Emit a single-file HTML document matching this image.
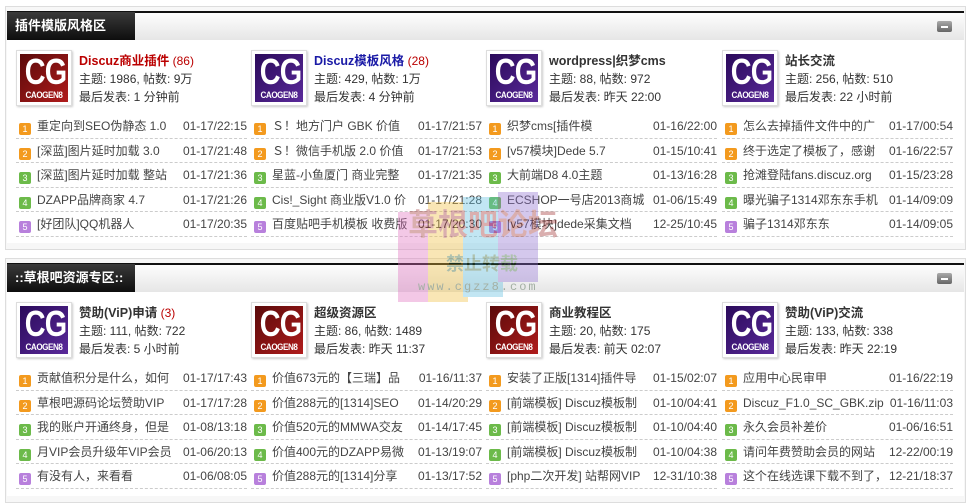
<!DOCTYPE html>
<html><head><meta charset="utf-8"><style>
*{margin:0;padding:0;box-sizing:border-box}
body{width:971px;height:503px;background:#fff;font-family:"Liberation Sans","Noto Sans CJK SC",sans-serif;font-size:12px;color:#333;position:relative;overflow:hidden}
.panel{position:absolute;left:5px;width:961px;border:1px solid #ddd;background:#f7f7f7}
.hd{position:absolute;left:1px;top:4px;right:1px;height:29px;border-top:2px solid #111;background:linear-gradient(#fdfdfd,#e6e6e6)}
.tab{position:absolute;left:0;top:-1px;width:128px;height:29px;background:linear-gradient(#3a3a3a,#0c0c0c);color:#fff;font-weight:bold;font-size:13px;line-height:28px;padding-left:8px}
.mn{position:absolute;right:12px;top:8px;width:15px;height:11px;background:linear-gradient(#aaa,#666);border-radius:2px}
.mn:after{content:"";position:absolute;left:4px;top:5px;width:7px;height:2px;background:#fff}
.body{position:absolute;left:1px;right:1px;top:33px;bottom:6px;background:#fff}
.f{position:absolute;width:230px;height:60px}
.logo{position:absolute;left:0;top:0;width:56px;height:56px;border:1px solid #ddd;background:#fff;box-shadow:1px 1px 2px #ccc;padding:3px}
.logo div{width:48px;height:48px;color:#fff;text-align:center;font-weight:bold;font-family:"Liberation Sans Narrow","Liberation Sans",sans-serif;overflow:hidden}
.logo b{display:block;font-size:36px;line-height:36px;transform:scaleX(.8);letter-spacing:-1px}
.logo i{display:block;font-style:normal;font-size:9px;line-height:10px;letter-spacing:-.5px;transform:scaleX(.9)}
.red{background:linear-gradient(135deg,#5a0a0a,#b01c1c)}
.pur{background:linear-gradient(135deg,#2a0a5a,#5a2a9a)}
.info{position:absolute;left:63px;top:2px;line-height:18px;white-space:nowrap}
.t{font-weight:bold;color:#333;font-size:12.5px}
.t.r{color:#b00}.t.b{color:#1a1aa6}
.n{color:#b00;font-weight:normal}
.row{position:absolute;width:231px;height:24.5px;border-bottom:1px dashed #ccc;line-height:24px;white-space:nowrap;overflow:hidden;color:#444}
.row s{display:inline-block;text-decoration:none;width:12px;height:12px;border-radius:2px;vertical-align:-2px;margin:0 6px 0 3px;color:#fff;font-size:9px;line-height:12px;text-align:center;font-style:normal}
.o{background:#f39a1e}.g{background:#6cba4a}.p{background:#b880dc}
.row em{position:absolute;right:0;top:0;font-style:normal;background:#fff;padding-left:4px}
.wm{position:absolute;left:398px;top:192px;width:170px;height:120px;opacity:.38}
</style></head><body>

<div class="panel" style="top:6px;height:244px">
<div class="hd"><div class="tab">插件模版风格区</div><div class="mn"></div></div>
<div class="body"></div>
</div>
<div class="panel" style="top:258px;height:245px">
<div class="hd"><div class="tab">::草根吧资源专区::</div><div class="mn"></div></div>
<div class="body"></div>
</div>

<div class="f" style="left:16px;top:50px"><div class="logo"><div class="red"><b>CG</b><i>CAOGEN8</i></div></div><div class="info"><span class="t r">Discuz商业插件</span> <span class="n">(86)</span><br>主题: 1986, 帖数: 9万<br>最后发表: 1 分钟前</div></div>
<div class="f" style="left:251px;top:50px"><div class="logo"><div class="pur"><b>CG</b><i>CAOGEN8</i></div></div><div class="info"><span class="t b">Discuz模板风格</span> <span class="n">(28)</span><br>主题: 429, 帖数: 1万<br>最后发表: 4 分钟前</div></div>
<div class="f" style="left:486px;top:50px"><div class="logo"><div class="pur"><b>CG</b><i>CAOGEN8</i></div></div><div class="info"><span class="t">wordpress|织梦cms</span><br>主题: 88, 帖数: 972<br>最后发表: 昨天 22:00</div></div>
<div class="f" style="left:722px;top:50px"><div class="logo"><div class="pur"><b>CG</b><i>CAOGEN8</i></div></div><div class="info"><span class="t">站长交流</span><br>主题: 256, 帖数: 510<br>最后发表: 22 小时前</div></div>

<div class="row" style="left:16px;top:114px"><s class="o">1</s>重定向到SEO伪静态 1.0<em>01-17/22:15</em></div>
<div class="row" style="left:16px;top:138.5px"><s class="o">2</s>[深蓝]图片延时加载 3.0<em>01-17/21:48</em></div>
<div class="row" style="left:16px;top:163px"><s class="g">3</s>[深蓝]图片延时加载 整站<em>01-17/21:36</em></div>
<div class="row" style="left:16px;top:187.5px"><s class="g">4</s>DZAPP品牌商家 4.7<em>01-17/21:26</em></div>
<div class="row" style="left:16px;top:212px"><s class="p">5</s>[好团队]QQ机器人<em>01-17/20:35</em></div>

<div class="row" style="left:251px;top:114px"><s class="o">1</s>Ｓ！地方门户 GBK 价值<em>01-17/21:57</em></div>
<div class="row" style="left:251px;top:138.5px"><s class="o">2</s>Ｓ！微信手机版 2.0 价值<em>01-17/21:53</em></div>
<div class="row" style="left:251px;top:163px"><s class="g">3</s>星蓝-小鱼厦门 商业完整<em>01-17/21:35</em></div>
<div class="row" style="left:251px;top:187.5px"><s class="g">4</s>Cis!_Sight 商业版V1.0 价<em>01-17/21:28</em></div>
<div class="row" style="left:251px;top:212px"><s class="p">5</s>百度贴吧手机模板 收费版<em>01-17/20:30</em></div>

<div class="row" style="left:486px;top:114px"><s class="o">1</s>织梦cms[插件模<em>01-16/22:00</em></div>
<div class="row" style="left:486px;top:138.5px"><s class="o">2</s>[v57模块]Dede 5.7<em>01-15/10:41</em></div>
<div class="row" style="left:486px;top:163px"><s class="g">3</s>大前端D8 4.0主题<em>01-13/16:28</em></div>
<div class="row" style="left:486px;top:187.5px"><s class="g">4</s>ECSHOP一号店2013商城<em>01-06/15:49</em></div>
<div class="row" style="left:486px;top:212px"><s class="p">5</s>[v57模块]dede采集文档<em>12-25/10:45</em></div>

<div class="row" style="left:722px;top:114px"><s class="o">1</s>怎么去掉插件文件中的广<em>01-17/00:54</em></div>
<div class="row" style="left:722px;top:138.5px"><s class="o">2</s>终于选定了模板了，感谢<em>01-16/22:57</em></div>
<div class="row" style="left:722px;top:163px"><s class="g">3</s>抢滩登陆fans.discuz.org<em>01-15/23:28</em></div>
<div class="row" style="left:722px;top:187.5px"><s class="g">4</s>曝光骗子1314邓东东手机<em>01-14/09:09</em></div>
<div class="row" style="left:722px;top:212px"><s class="p">5</s>骗子1314邓东东<em>01-14/09:05</em></div>

<div class="f" style="left:16px;top:302px"><div class="logo"><div class="pur"><b>CG</b><i>CAOGEN8</i></div></div><div class="info"><span class="t">赞助(ViP)申请</span> <span class="n">(3)</span><br>主题: 111, 帖数: 722<br>最后发表: 5 小时前</div></div>
<div class="f" style="left:251px;top:302px"><div class="logo"><div class="red"><b>CG</b><i>CAOGEN8</i></div></div><div class="info"><span class="t">超级资源区</span><br>主题: 86, 帖数: 1489<br>最后发表: 昨天 11:37</div></div>
<div class="f" style="left:486px;top:302px"><div class="logo"><div class="red"><b>CG</b><i>CAOGEN8</i></div></div><div class="info"><span class="t">商业教程区</span><br>主题: 20, 帖数: 175<br>最后发表: 前天 02:07</div></div>
<div class="f" style="left:722px;top:302px"><div class="logo"><div class="pur"><b>CG</b><i>CAOGEN8</i></div></div><div class="info"><span class="t">赞助(ViP)交流</span><br>主题: 133, 帖数: 338<br>最后发表: 昨天 22:19</div></div>

<div class="row" style="left:16px;top:366px"><s class="o">1</s>贡献值积分是什么，如何<em>01-17/17:43</em></div>
<div class="row" style="left:16px;top:390.5px"><s class="o">2</s>草根吧源码论坛赞助VIP<em>01-17/17:28</em></div>
<div class="row" style="left:16px;top:415px"><s class="g">3</s>我的账户开通终身，但是<em>01-08/13:18</em></div>
<div class="row" style="left:16px;top:439.5px"><s class="g">4</s>月VIP会员升级年VIP会员<em>01-06/20:13</em></div>
<div class="row" style="left:16px;top:464px"><s class="p">5</s>有没有人，来看看<em>01-06/08:05</em></div>

<div class="row" style="left:251px;top:366px"><s class="o">1</s>价值673元的【三瑞】品<em>01-16/11:37</em></div>
<div class="row" style="left:251px;top:390.5px"><s class="o">2</s>价值288元的[1314]SEO<em>01-14/20:29</em></div>
<div class="row" style="left:251px;top:415px"><s class="g">3</s>价值520元的MMWA交友<em>01-14/17:45</em></div>
<div class="row" style="left:251px;top:439.5px"><s class="g">4</s>价值400元的DZAPP易微<em>01-13/19:07</em></div>
<div class="row" style="left:251px;top:464px"><s class="p">5</s>价值288元的[1314]分享<em>01-13/17:52</em></div>

<div class="row" style="left:486px;top:366px"><s class="o">1</s>安装了正版[1314]插件导<em>01-15/02:07</em></div>
<div class="row" style="left:486px;top:390.5px"><s class="o">2</s>[前端模板] Discuz模板制<em>01-10/04:41</em></div>
<div class="row" style="left:486px;top:415px"><s class="g">3</s>[前端模板] Discuz模板制<em>01-10/04:40</em></div>
<div class="row" style="left:486px;top:439.5px"><s class="g">4</s>[前端模板] Discuz模板制<em>01-10/04:38</em></div>
<div class="row" style="left:486px;top:464px"><s class="p">5</s>[php二次开发] 站帮网VIP<em>12-31/10:38</em></div>

<div class="row" style="left:722px;top:366px"><s class="o">1</s>应用中心民审甲<em>01-16/22:19</em></div>
<div class="row" style="left:722px;top:390.5px"><s class="o">2</s>Discuz_F1.0_SC_GBK.zip<em>01-16/11:03</em></div>
<div class="row" style="left:722px;top:415px"><s class="g">3</s>永久会员补差价<em>01-06/16:51</em></div>
<div class="row" style="left:722px;top:439.5px"><s class="g">4</s>请问年费赞助会员的网站<em>12-22/00:19</em></div>
<div class="row" style="left:722px;top:464px"><s class="p">5</s>这个在线选课下载不到了，<em>12-21/18:37</em></div>

<div class="wm">
<div style="position:absolute;left:0;top:20px;width:40px;height:90px;background:#e070c0"></div>
<div style="position:absolute;left:30px;top:10px;width:40px;height:100px;background:#f0c040"></div>
<div style="position:absolute;left:65px;top:5px;width:40px;height:100px;background:#60c0e0"></div>
<div style="position:absolute;left:100px;top:0;width:40px;height:90px;background:#9070d0"></div>
<div style="position:absolute;left:10px;top:8px;font-size:30px;font-weight:bold;color:#a03030;white-space:nowrap">草根吧论坛</div>
<div style="position:absolute;left:48px;top:58px;font-size:18px;font-weight:bold;color:#306030">禁止转载</div>
<div style="position:absolute;left:20px;top:88px;font-size:12px;color:#305030;letter-spacing:2px;font-family:'Liberation Mono',monospace">www.cgzz8.com</div>
</div>
</body></html>
